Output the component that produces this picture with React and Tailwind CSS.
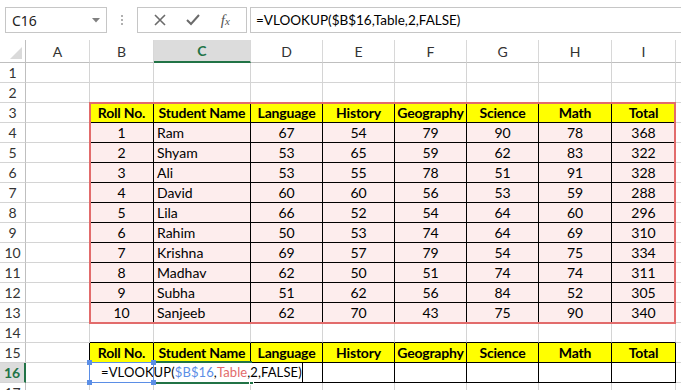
import React from "react";

const cols = [
  { k: "A", w: "w-[64px]" },
  { k: "B", w: "w-[64px]" },
  { k: "C", w: "w-[97px]" },
  { k: "D", w: "w-[72px]" },
  { k: "E", w: "w-[72px]" },
  { k: "F", w: "w-[72px]" },
  { k: "G", w: "w-[72px]" },
  { k: "H", w: "w-[73px]" },
  { k: "I", w: "w-[64px]" },
  { k: "J", w: "w-[80px]" },
];

const heads = ["Roll No.", "Student Name", "Language", "History", "Geography", "Science", "Math", "Total"];

const students = [
  [1, "Ram", 67, 54, 79, 90, 78, 368],
  [2, "Shyam", 53, 65, 59, 62, 83, 322],
  [3, "Ali", 53, 55, 78, 51, 91, 328],
  [4, "David", 60, 60, 56, 53, 59, 288],
  [5, "Lila", 66, 52, 54, 64, 60, 296],
  [6, "Rahim", 50, 53, 74, 64, 69, 310],
  [7, "Krishna", 69, 57, 79, 54, 75, 334],
  [8, "Madhav", 62, 50, 51, 74, 74, 311],
  [9, "Subha", 51, 62, 56, 84, 52, 305],
  [10, "Sanjeeb", 62, 70, 43, 75, 90, 340],
];

const inMain = (r) => r >= 3 && r <= 13;
const inLookup = (r) => r === 15 || r === 16;

function cellValue(r, ci) {
  if (ci < 1 || ci > 8) return null;
  if (r === 3 || r === 15) return heads[ci - 1];
  if (r >= 4 && r <= 13) return students[r - 4][ci - 1];
  return null;
}

function Cell({ r, ci, col }) {
  const table = (inMain(r) || inLookup(r)) && ci >= 1 && ci <= 8;
  const head = table && (r === 3 || r === 15);
  const rightBlack = table || (ci === 0 && (inMain(r) || inLookup(r)));
  const bottomBlack = table || ((r === 2 || r === 14) && ci >= 1 && ci <= 8);
  const bg = head ? "bg-[#ffff00]" : table && inMain(r) ? "bg-[#fdeded]" : "bg-white";
  const val = cellValue(r, ci);
  const align = ci === 2 && !head ? "justify-start pl-[3px]" : "justify-center";

  return (
    <div
      className={`${col.w} shrink-0 h-full flex items-center ${align} ${bg} border-r border-b ${
        rightBlack ? "border-r-black" : "border-r-[#d4d4d4]"
      } ${bottomBlack ? "border-b-black" : "border-b-[#d4d4d4]"} ${
        head ? "font-bold tracking-[-0.2px]" : ""
      } text-[14px] text-black whitespace-nowrap overflow-hidden`}
    >
      {val}
    </div>
  );
}

function Toolbar() {
  return (
    <div className="h-[40px] pt-[7px] flex items-start bg-white font-['Noto_Sans',sans-serif]">
      <div className="ml-[5px] w-[102px] h-[26px] border border-[#c6c6c6] flex items-center justify-between pl-[6px] pr-[6px]">
        <span className="text-[14px] text-[#222]">C16</span>
        <svg width="8" height="5" viewBox="0 0 8 5">
          <path d="M0 0 L8 0 L4 4.5 Z" fill="#808080" />
        </svg>
      </div>
      <div className="w-[30px] h-[26px] flex flex-col items-center justify-center gap-[2px]">
        <div className="w-[2px] h-[2px] bg-[#b0b0b0]" />
        <div className="w-[2px] h-[2px] bg-[#b0b0b0]" />
        <div className="w-[2px] h-[2px] bg-[#b0b0b0]" />
      </div>
      <div className="w-[110px] h-[26px] border border-[#c6c6c6] flex items-center justify-around px-[6px]">
        <svg width="12" height="12" viewBox="0 0 12 12">
          <path d="M1 1 L11 11 M11 1 L1 11" stroke="#6b6b6b" strokeWidth="1.6" />
        </svg>
        <svg width="14" height="12" viewBox="0 0 14 12">
          <path d="M1 6 L5 10 L13 1" stroke="#6b6b6b" strokeWidth="2" fill="none" />
        </svg>
        <span className="font-['Liberation_Serif',serif] italic text-[15px] text-[#555] leading-none">
          f<span className="text-[11px]">x</span>
        </span>
      </div>
      <div className="ml-[3px] flex-1 h-[26px] border-t border-b border-l border-[#c6c6c6] flex items-center pl-[5px] font-['Lato',sans-serif] text-[13.5px] text-black whitespace-nowrap">
        =VLOOKUP($B$16,Table,2,FALSE)
      </div>
    </div>
  );
}

function HeaderRow() {
  return (
    <div className="flex h-[23px]">
      <div className="w-[26px] shrink-0 h-full border-r border-b border-[#bfbfbf] bg-white flex items-end justify-end pr-[3px] pb-[3px]">
        <svg width="12" height="12" viewBox="0 0 12 12">
          <path d="M12 0 L12 12 L0 12 Z" fill="#dadada" />
        </svg>
      </div>
      {cols.map((c) => {
        const sel = c.k === "C";
        return (
          <div
            key={c.k}
            className={`${c.w} shrink-0 h-full flex items-center justify-center border-r border-r-[#d8d8d8] ${
              sel
                ? "bg-[#dcdcdc] border-b-2 border-b-[#217346] text-[#217346] font-bold"
                : "bg-white border-b border-b-[#bfbfbf] text-[#333]"
            } text-[14px]`}
          >
            {c.k === "J" ? null : c.k}
          </div>
        );
      })}
    </div>
  );
}

function Row({ r }) {
  const act = r === 16;
  return (
    <div className="flex h-[20px]">
      <div
        className={`w-[26px] shrink-0 h-full flex items-center justify-center border-b border-b-[#d4d4d4] text-[14px] ${
          act
            ? "bg-[#dcdcdc] border-r-2 border-r-[#217346] text-[#217346] font-bold"
            : "bg-white border-r border-r-[#bfbfbf] text-[#333]"
        }`}
      >
        {r}
      </div>
      {cols.map((c, ci) => (
        <Cell key={c.k} r={r} ci={ci} col={c} />
      ))}
    </div>
  );
}

export default function App() {
  const rows = Array.from({ length: 17 }, (_, i) => i + 1);
  return (
    <div className="relative w-[681px] h-[390px] overflow-hidden bg-white font-['Lato',sans-serif]">
      <Toolbar />
      <HeaderRow />
      {rows.map((r) => (
        <Row key={r} r={r} />
      ))}

      {/* named range "Table" outline */}
      <div className="absolute left-[89px] top-[102px] w-[587px] h-[222px] border-2 border-[#e26b6b] pointer-events-none" />

      {/* active cell C16 */}
      <div className="absolute left-[153px] top-[361px] w-[99px] h-[23px] border-2 border-[#217346]" />
      <div className="absolute left-[249px] top-[380px] w-[5px] h-[5px] bg-[#217346] border border-white" />

      {/* in-cell editing text */}
      <div className="absolute left-[90px] top-[363px] w-[213px] h-[19px] bg-white border-r border-r-black flex items-center pl-[11px] text-[13px] tracking-[0.1px] text-black whitespace-nowrap">
        =VLOOKUP(<span className="text-[#5b8ee6]">$B$16</span>,<span className="text-[#e26b6b]">Table</span>,2,FALSE)
      </div>

      {/* referenced range $B$16 */}
      <div className="absolute left-[89px] top-[362px] w-[65px] h-[21px] border border-[#5b8ee6]" />
      <div className="absolute left-[87px] top-[360px] w-[5px] h-[5px] bg-[#5b8ee6]" />
      <div className="absolute left-[151px] top-[360px] w-[5px] h-[5px] bg-[#5b8ee6]" />
      <div className="absolute left-[87px] top-[380px] w-[5px] h-[5px] bg-[#5b8ee6]" />
      <div className="absolute left-[151px] top-[380px] w-[5px] h-[5px] bg-[#5b8ee6]" />
    </div>
  );
}
